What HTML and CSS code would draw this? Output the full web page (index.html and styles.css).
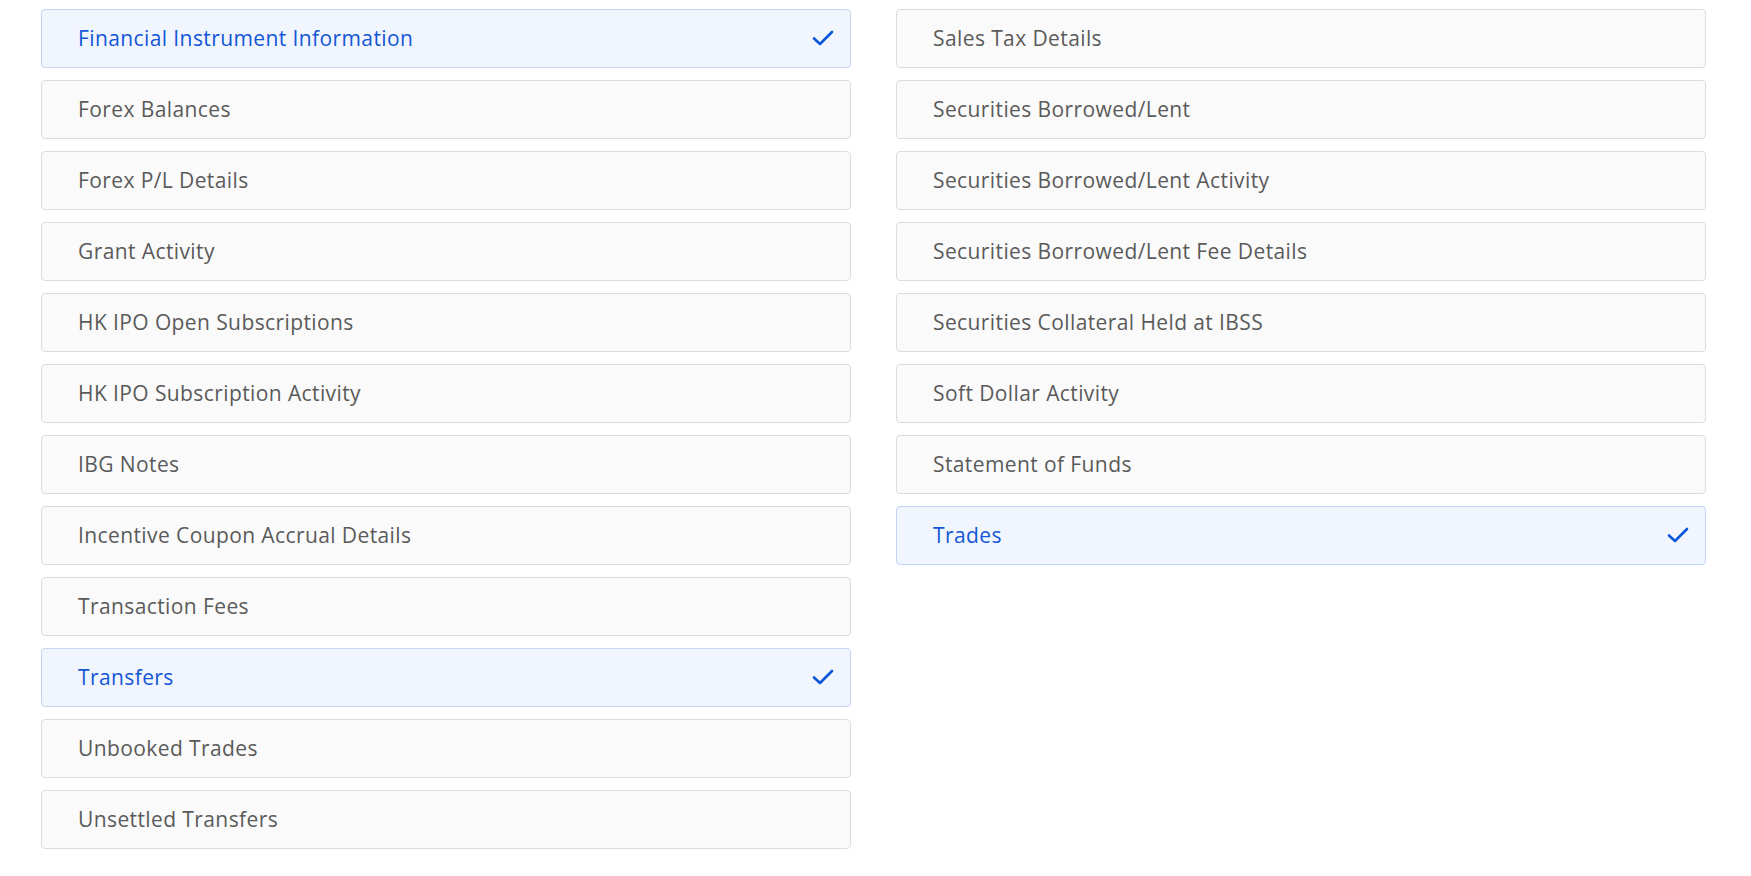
FILE: index.html
```html
<!DOCTYPE html>
<html>
<head>
<meta charset="utf-8">
<link rel="stylesheet" href="styles.css">
</head>
<body>
<div class="sections">
  <div class="col">
    <div class="item selected">Financial Instrument Information
      <svg class="check" width="22" height="16" viewBox="0 0 22 16"><path d="M2 8.5 L8 14 L20 2" fill="none" stroke="#0a56d8" stroke-width="2.6" stroke-linecap="round" stroke-linejoin="round"/></svg>
    </div>
    <div class="item">Forex Balances</div>
    <div class="item">Forex P/L Details</div>
    <div class="item">Grant Activity</div>
    <div class="item">HK IPO Open Subscriptions</div>
    <div class="item">HK IPO Subscription Activity</div>
    <div class="item">IBG Notes</div>
    <div class="item">Incentive Coupon Accrual Details</div>
    <div class="item">Transaction Fees</div>
    <div class="item selected">Transfers
      <svg class="check" width="22" height="16" viewBox="0 0 22 16"><path d="M2 8.5 L8 14 L20 2" fill="none" stroke="#0a56d8" stroke-width="2.6" stroke-linecap="round" stroke-linejoin="round"/></svg>
    </div>
    <div class="item">Unbooked Trades</div>
    <div class="item">Unsettled Transfers</div>
  </div>
  <div class="col">
    <div class="item">Sales Tax Details</div>
    <div class="item">Securities Borrowed/Lent</div>
    <div class="item">Securities Borrowed/Lent Activity</div>
    <div class="item">Securities Borrowed/Lent Fee Details</div>
    <div class="item">Securities Collateral Held at IBSS</div>
    <div class="item">Soft Dollar Activity</div>
    <div class="item">Statement of Funds</div>
    <div class="item selected">Trades
      <svg class="check" width="22" height="16" viewBox="0 0 22 16"><path d="M2 8.5 L8 14 L20 2" fill="none" stroke="#0a56d8" stroke-width="2.6" stroke-linecap="round" stroke-linejoin="round"/></svg>
    </div>
  </div>
</div>
</body>
</html>
```

FILE: styles.css
```css
body {
    margin: 0;
    background: #fff;
    font-family: "Open Sans", "Noto Sans", sans-serif;
}

.sections {
    display: grid;
    grid-template-columns: 1fr 1fr;
    column-gap: 45px;
    padding: 9px 45px 0 41px;
    align-items: start;
}

.col {
    display: flex;
    flex-direction: column;
    gap: 12px;
}

.item {
    display: flex;
    align-items: center;
    justify-content: space-between;
    box-sizing: border-box;
    height: 59px;
    padding: 0 16px 1px 36px;
    background: #fafafa;
    border: 1px solid #dcdcdc;
    border-radius: 4px;
    color: #5a5a5a;
    font-size: 21px;
    letter-spacing: 0.4px;
}

.item.selected {
    background: #f1f5fd;
    border-color: #c3d5f3;
    color: #1357d6;
}

.check {
    flex: none;
}
```
